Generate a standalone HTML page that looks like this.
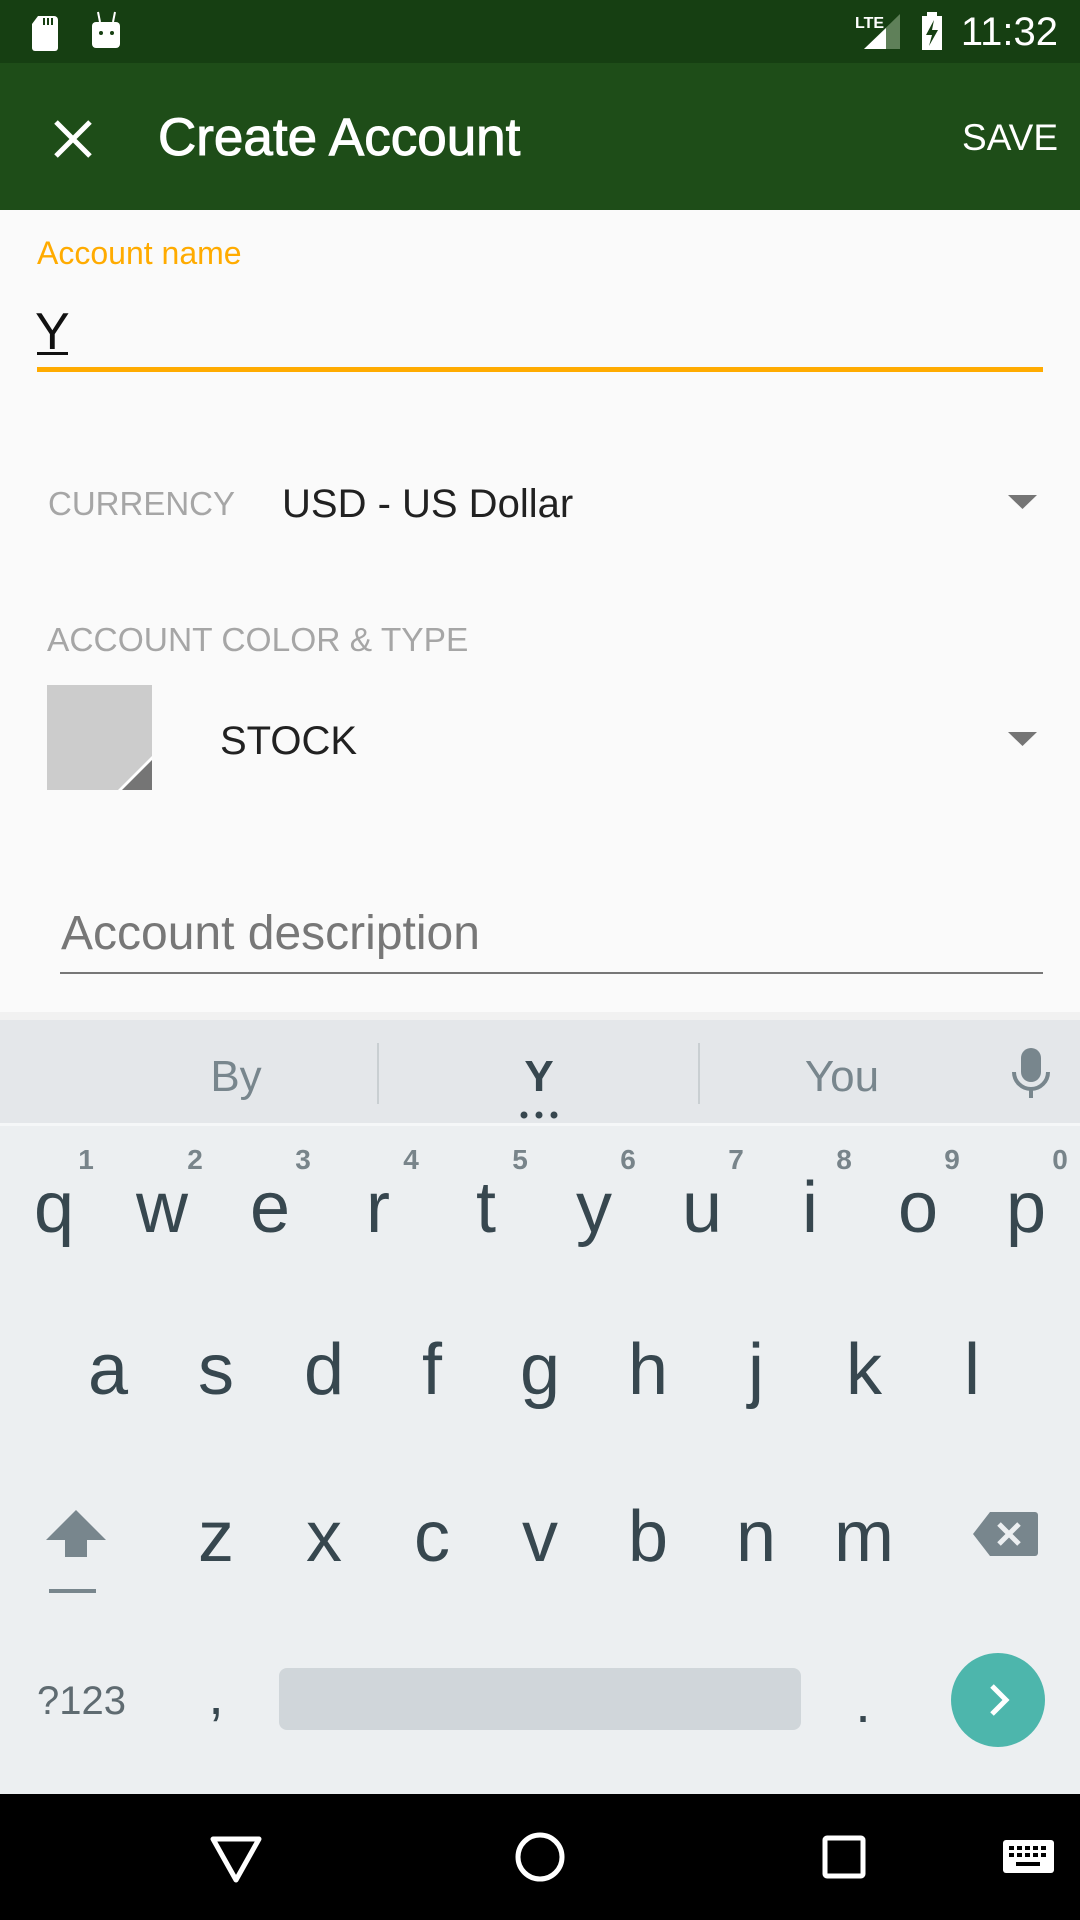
<!DOCTYPE html>
<html><head><meta charset="utf-8"><style>
html,body{margin:0;padding:0;width:1080px;height:1920px;overflow:hidden;background:#fafafa}
svg{display:block}
text{font-family:"Liberation Sans",sans-serif}
</style></head><body>
<svg width="1080" height="1920" viewBox="0 0 1080 1920" xmlns="http://www.w3.org/2000/svg">
<rect x="0" y="0" width="1080" height="63" fill="#163f12"/>
<rect x="0" y="63" width="1080" height="147" fill="#1e4d18"/>
<!-- status icons -->
<path d="M38 16 h16 a4 4 0 0 1 4 4 v28 a3 3 0 0 1 -3 3 h-20 a3 3 0 0 1 -3 -3 v-24 z" fill="#fff"/>
<rect x="43" y="18" width="2" height="7" fill="#163f12"/><rect x="47" y="18" width="2" height="7" fill="#163f12"/><rect x="51" y="18" width="2" height="7" fill="#163f12"/>
<path d="M96 22 h20 a4 4 0 0 1 4 4 v18 a4 4 0 0 1 -4 4 h-20 a4 4 0 0 1 -4 -4 v-18 a4 4 0 0 1 4 -4z" fill="#fff"/>
<line x1="100" y1="22" x2="98" y2="12" stroke="#fff" stroke-width="2"/><line x1="113" y1="22" x2="115" y2="12" stroke="#fff" stroke-width="2"/>
<circle cx="101" cy="33" r="2" fill="#163f12"/><circle cx="112" cy="33" r="2" fill="#163f12"/>
<text x="855" y="28" font-size="16" fill="#fff" font-weight="bold">LTE</text>
<path d="M864 49 L900 14 V49 Z" fill="#5f8059"/><path d="M864 49 L886 28 V49 Z" fill="#fff"/>
<rect x="922" y="16" width="20" height="34" fill="#fff"/><rect x="927" y="12" width="10" height="5" fill="#fff"/>
<path d="M934 20 L926 35 H932 L929 46 L938 30 H932 Z" fill="#163f12"/>
<text x="1058" y="45" font-size="40" fill="#fff" text-anchor="end">11:32</text>
<!-- toolbar -->
<path d="M56 122 L90 156 M90 122 L56 156" stroke="#fff" stroke-width="5"/>
<text x="158" y="155" font-size="53" fill="#fff" stroke="#fff" stroke-width="1">Create Account</text>
<text x="1058" y="150" font-size="37" fill="#fff" text-anchor="end">SAVE</text>
<!-- form -->
<text x="37" y="264" font-size="32" fill="#ffab00">Account name</text>
<text x="35" y="349" font-size="52" fill="#111">Y</text>
<rect x="37" y="352" width="31" height="3" fill="#111"/>
<rect x="37" y="367" width="1006" height="5" fill="#ffab00"/>
<text x="48" y="515" font-size="33" fill="#a6a6a6">CURRENCY</text>
<text x="282" y="517" font-size="40" fill="#212121">USD - US Dollar</text>
<path d="M1008 495 h29 l-14.5 14 z" fill="#757575"/>
<text x="47" y="651" font-size="33.5" fill="#a6a6a6">ACCOUNT COLOR &amp; TYPE</text>
<rect x="47" y="685" width="105" height="105" fill="#cccccc"/>
<path d="M118 790 L152 756 V790 Z" fill="#fff"/>
<path d="M122 790 L152 760 V790 Z" fill="#757575"/>
<text x="220" y="754" font-size="40" fill="#212121">STOCK</text>
<path d="M1008 732 h29 l-14.5 14 z" fill="#757575"/>
<text x="61" y="949" font-size="48" fill="#777">Account description</text>
<rect x="60" y="972" width="983" height="2" fill="#777"/>
<!-- keyboard -->
<rect x="0" y="1012" width="1080" height="8" fill="#f1f1f1"/>
<rect x="0" y="1020" width="1080" height="104" fill="#e4e7ea"/>
<rect x="0" y="1123" width="1080" height="3" fill="#f5f7f8"/>
<rect x="0" y="1126" width="1080" height="668" fill="#eceff1"/>
<rect x="377" y="1043" width="2" height="61" fill="#c9cfd2"/>
<rect x="698" y="1043" width="2" height="61" fill="#c9cfd2"/>
<g font-size="44" text-anchor="middle">
<text x="236" y="1091" fill="#78868d">By</text>
<text x="539" y="1091" fill="#37474f" font-weight="bold">Y</text>
<text x="842" y="1091" fill="#78868d">You</text>
</g>
<circle cx="524" cy="1115" r="3.5" fill="#37474f"/><circle cx="539" cy="1115" r="3.5" fill="#37474f"/><circle cx="554" cy="1115" r="3.5" fill="#37474f"/>
<rect x="1021" y="1048" width="20" height="34" rx="10" fill="#78868d"/>
<path d="M1014 1072 a17 17 0 0 0 34 0" stroke="#78868d" stroke-width="4" fill="none"/>
<rect x="1029" y="1088" width="4" height="10" fill="#78868d"/>
<g font-size="28" font-weight="bold" fill="#78848a" text-anchor="middle">
<text x="86" y="1169">1</text><text x="195" y="1169">2</text><text x="303" y="1169">3</text><text x="411" y="1169">4</text><text x="520" y="1169">5</text><text x="628" y="1169">6</text><text x="736" y="1169">7</text><text x="844" y="1169">8</text><text x="952" y="1169">9</text><text x="1060" y="1169">0</text>
</g>
<g font-size="72" fill="#37474f" text-anchor="middle">
<text x="54" y="1232">q</text><text x="162" y="1232">w</text><text x="270" y="1232">e</text><text x="378" y="1232">r</text><text x="486" y="1232">t</text><text x="594" y="1232">y</text><text x="702" y="1232">u</text><text x="810" y="1232">i</text><text x="918" y="1232">o</text><text x="1026" y="1232">p</text>
<text x="108" y="1394">a</text><text x="216" y="1394">s</text><text x="324" y="1394">d</text><text x="432" y="1394">f</text><text x="540" y="1394">g</text><text x="648" y="1394">h</text><text x="756" y="1394">j</text><text x="864" y="1394">k</text><text x="972" y="1394">l</text>
<text x="216" y="1561">z</text><text x="324" y="1561">x</text><text x="432" y="1561">c</text><text x="540" y="1561">v</text><text x="648" y="1561">b</text><text x="756" y="1561">n</text><text x="864" y="1561">m</text>
</g>
<path d="M76 1510 L106 1540 H87 V1557 H65 V1540 H46 Z" fill="#78868d"/>
<rect x="49" y="1589" width="47" height="4" fill="#78868d"/>
<path d="M990 1512 H1035 a3 3 0 0 1 3 3 V1553 a3 3 0 0 1 -3 3 H990 L973 1534 Z" fill="#78868d"/>
<path d="M999 1524 L1019 1544 M1019 1524 L999 1544" stroke="#eceff1" stroke-width="5"/>
<text x="37" y="1714" font-size="40" fill="#5f6b71">?123</text>
<text x="216" y="1714" font-size="56" fill="#37474f" text-anchor="middle">,</text>
<rect x="279" y="1668" width="522" height="62" rx="8" fill="#d0d6da"/>
<text x="863" y="1722" font-size="56" fill="#37474f" text-anchor="middle">.</text>
<circle cx="998" cy="1700" r="47" fill="#4db6ac"/>
<path d="M992 1686 L1006 1700 L992 1714" stroke="#fff" stroke-width="5" fill="none"/>
<!-- nav bar -->
<rect x="0" y="1794" width="1080" height="126" fill="#000"/>
<path d="M213 1839 H259 L236 1880 Z" stroke="#fff" stroke-width="5" fill="none" stroke-linejoin="round"/>
<circle cx="540" cy="1857" r="22" stroke="#fff" stroke-width="5" fill="none"/>
<rect x="825" y="1838" width="38" height="38" rx="2" stroke="#fff" stroke-width="5" fill="none"/>
<rect x="1003" y="1840" width="51" height="33" rx="3" fill="#fff"/>
<g fill="#000">
<rect x="1009" y="1846" width="5" height="4"/><rect x="1017" y="1846" width="5" height="4"/><rect x="1025" y="1846" width="5" height="4"/><rect x="1033" y="1846" width="5" height="4"/><rect x="1041" y="1846" width="5" height="4"/>
<rect x="1009" y="1853" width="5" height="4"/><rect x="1017" y="1853" width="5" height="4"/><rect x="1025" y="1853" width="5" height="4"/><rect x="1033" y="1853" width="5" height="4"/><rect x="1041" y="1853" width="5" height="4"/>
<rect x="1016" y="1862" width="24" height="4"/>
</g>
</svg>
</body></html>
